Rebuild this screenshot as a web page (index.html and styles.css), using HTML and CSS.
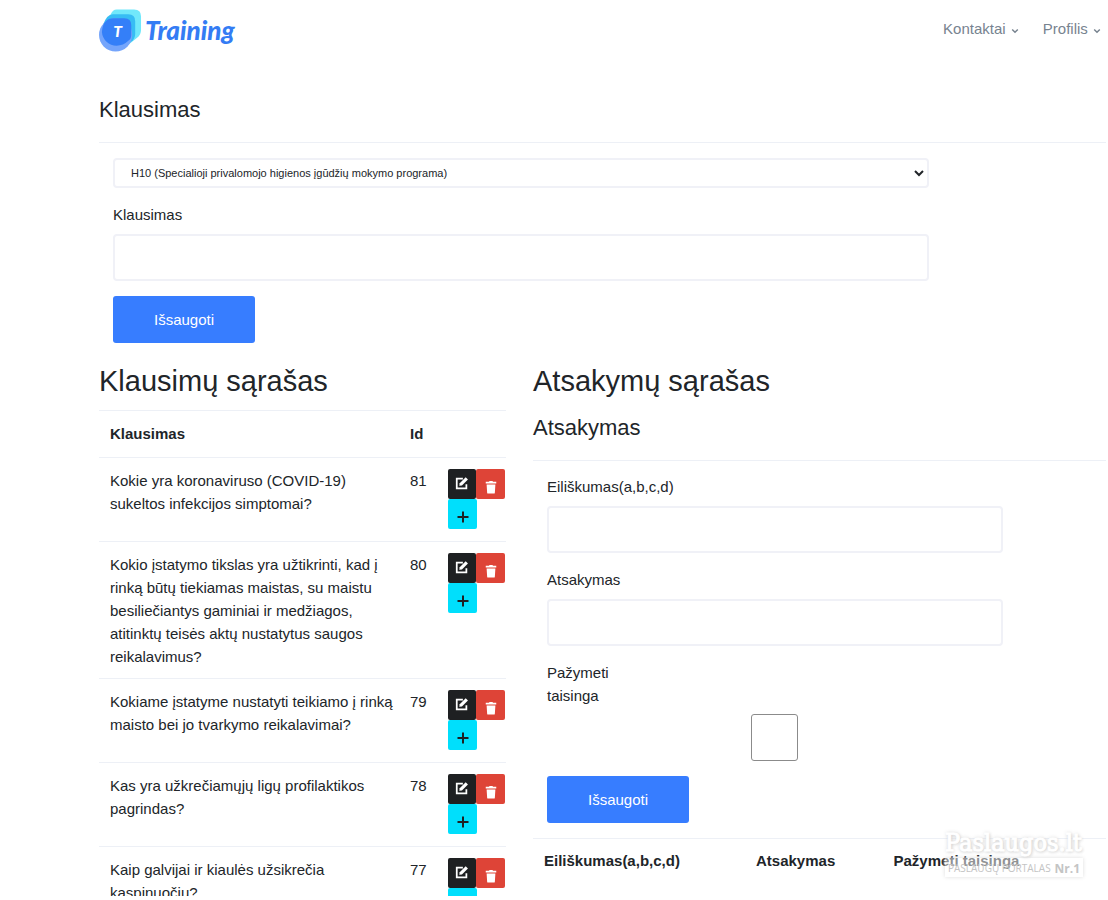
FILE: index.html
```html
<!DOCTYPE html>
<html lang="lt">
<head>
  <meta charset="UTF-8" />
  <meta name="viewport" content="width=device-width, initial-scale=1" />
  <title>Training</title>
  <link rel="stylesheet" href="styles.css">
</head>
<body>
  <svg class="sprite" aria-hidden="true">
    <symbol id="edit" viewBox="0 0 16 16">
      <path d="M9 3H2v11h11V9.500" fill="none" stroke="currentColor" stroke-width="2" />
      <path d="M4.800 11.200l.6-3L12.200 1.400l2.600 2.600-6.900 6.800z" fill="currentColor" />
    </symbol>
    <symbol id="trash" viewBox="0 0 14 16">
      <path d="M1 2h3.500l1-1h3l1 1H13v2H1zM2 5h10l-.6 9.500a1 1 0 0 1-1 1H3.600a1 1 0 0 1-1-1z" fill="currentColor" />
    </symbol>
    <symbol id="plus" viewBox="0 0 12 12">
      <path d="M6 .5v11M.5 6h11" fill="none" stroke="currentColor" stroke-width="2" />
    </symbol>
    <symbol id="chevron" viewBox="0 0 8 6">
      <path d="M1.200 1.500L4 4.200l2.800-2.700" fill="none" stroke="currentColor" stroke-width="1.500" />
    </symbol>
  </svg>

  <div class="page">
    <header class="header">
      <a class="brand" href="#">
        <svg class="brand-logo" viewBox="0 0 44 44" aria-hidden="true">
          <path d="M18 1h18q7 0 7 7v14q0 5-4 8l-9 7L8 16l4-10q2-5 6-5z" fill="#71e8fb" />
          <path d="M14 6h16q7 0 7 7v13q0 5-4 8l-7 5L4 17q4-11 10-11z" fill="#37bdf4" />
          <circle cx="17" cy="27" r="17" fill="#75a5fb" />
          <path d="M15 10h11q7 0 7 7v10q0 4-3 6-5 5-12 5A15 15 0 0 1 3 24Q4 10 15 10z" fill="#347ff8" />
          <text x="19" y="29" class="logo-letter">T</text>
        </svg>
        <span>Training</span>
      </a>
      <nav class="nav">
        <a href="#">Kontaktai <svg class="chevron"><use href="#chevron" /></svg></a>
        <a href="#">Profilis <svg class="chevron"><use href="#chevron" /></svg></a>
      </nav>
    </header>

    <main>
      <h4 class="title">Klausimas</h4>
      <form class="form question-form">
        <select class="select" aria-label="Programa">
          <option>H10 (Specialioji privalomojo higienos įgūdžių mokymo programa)</option>
        </select>
        <label for="question">Klausimas</label>
        <input class="input" type="text" id="question">
        <button class="save" type="button">Išsaugoti</button>
      </form>

      <div class="columns">
        <section>
          <h2>Klausimų sąrašas</h2>
          <table class="questions">
            <thead>
              <tr><th>Klausimas</th><th class="col-id">Id</th><th class="col-actions"></th></tr>
            </thead>
            <tbody>
              <tr>
                <td>Kokie yra koronaviruso (COVID-19) sukeltos infekcijos simptomai?</td>
                <td>81</td>
                <td><div class="actions">
                  <button class="edit" aria-label="Redaguoti"><svg><use href="#edit" /></svg></button>
                  <button class="delete" aria-label="Trinti"><svg><use href="#trash" /></svg></button>
                  <button class="add" aria-label="Pridėti"><svg><use href="#plus" /></svg></button>
                </div></td>
              </tr>
              <tr>
                <td>Kokio įstatymo tikslas yra užtikrinti, kad į rinką būtų tiekiamas maistas, su maistu besiliečiantys gaminiai ir medžiagos, atitinktų teisės aktų nustatytus saugos reikalavimus?</td>
                <td>80</td>
                <td><div class="actions">
                  <button class="edit" aria-label="Redaguoti"><svg><use href="#edit" /></svg></button>
                  <button class="delete" aria-label="Trinti"><svg><use href="#trash" /></svg></button>
                  <button class="add" aria-label="Pridėti"><svg><use href="#plus" /></svg></button>
                </div></td>
              </tr>
              <tr>
                <td>Kokiame įstatyme nustatyti teikiamo į rinką maisto bei jo tvarkymo reikalavimai?</td>
                <td>79</td>
                <td><div class="actions">
                  <button class="edit" aria-label="Redaguoti"><svg><use href="#edit" /></svg></button>
                  <button class="delete" aria-label="Trinti"><svg><use href="#trash" /></svg></button>
                  <button class="add" aria-label="Pridėti"><svg><use href="#plus" /></svg></button>
                </div></td>
              </tr>
              <tr>
                <td>Kas yra užkrečiamųjų ligų profilaktikos pagrindas?</td>
                <td>78</td>
                <td><div class="actions">
                  <button class="edit" aria-label="Redaguoti"><svg><use href="#edit" /></svg></button>
                  <button class="delete" aria-label="Trinti"><svg><use href="#trash" /></svg></button>
                  <button class="add" aria-label="Pridėti"><svg><use href="#plus" /></svg></button>
                </div></td>
              </tr>
              <tr>
                <td>Kaip galvijai ir kiaulės užsikrečia kaspinuočiu?</td>
                <td>77</td>
                <td><div class="actions">
                  <button class="edit" aria-label="Redaguoti"><svg><use href="#edit" /></svg></button>
                  <button class="delete" aria-label="Trinti"><svg><use href="#trash" /></svg></button>
                  <button class="add" aria-label="Pridėti"><svg><use href="#plus" /></svg></button>
                </div></td>
              </tr>
            </tbody>
          </table>
        </section>

        <section>
          <h2>Atsakymų sąrašas</h2>
          <h4 class="title">Atsakymas</h4>
          <form class="form answer-form">
            <label for="order">Eiliškumas(a,b,c,d)</label>
            <input class="input" type="text" id="order">
            <label for="answer">Atsakymas</label>
            <input class="input" type="text" id="answer">
            <label class="check-label" for="correct">Pažymeti taisinga</label>
            <input class="check" type="checkbox" id="correct">
            <button class="save" type="button">Išsaugoti</button>
          </form>
          <table class="answers">
            <thead>
              <tr><th>Eiliškumas(a,b,c,d)</th><th>Atsakymas</th><th>Pažymeti taisinga</th></tr>
            </thead>
          </table>
        </section>
      </div>
    </main>
  </div>

  <div class="watermark">
    <div class="watermark-name">Paslaugos.lt</div>
    <div class="watermark-bar"><span>PASLAUGŲ PORTALAS</span><b>Nr.1</b></div>
  </div>
</body>
</html>
```

FILE: styles.css
```css
* {
  box-sizing: border-box;
}
body {
  margin: 0;
  font-family: "Liberation Sans", Arial, sans-serif;
  font-size: 15px;
  line-height: 23px;
  color: #212529;
  background: #fff;
}
.sprite {
  display: none;
}
.page {
  height: calc(100vh - 4px);
  overflow: hidden;
  padding: 0 2px 0 99px;
}

/* header */
.header {
  display: flex;
  justify-content: space-between;
  align-items: center;
  height: 60px;
}
.brand {
  display: flex;
  align-items: center;
  gap: 3px;
  color: #347cf4;
  font-family: Lato, sans-serif;
  font-size: 26px;
  font-weight: 900;
  font-style: italic;
  text-decoration: none;
}
.brand-logo {
  width: 43px;
  height: 44px;
}
.logo-letter {
  fill: #fff;
  font-size: 16px;
  text-anchor: middle;
}
.nav {
  display: flex;
  gap: 24px;
  padding: 0 5px 4px 0;
}
.nav a {
  color: #77838f;
  text-decoration: none;
}
.chevron {
  width: 8px;
  height: 6px;
  margin-left: 1px;
}

/* headings */
h2,
h4 {
  margin: 0;
  font-weight: normal;
}
h2 {
  font-size: 29px;
  line-height: 36px;
}
.title {
  font-size: 22px;
  line-height: 28px;
  padding-bottom: 18px;
  border-bottom: 1px solid #edf0f6;
}
main > .title {
  padding-top: 36px;
}

/* forms */
.form {
  display: flex;
  flex-direction: column;
  align-items: flex-start;
}
.form label {
  margin-bottom: 8px;
}
.question-form {
  width: 83%;
  padding: 15px 6px 20px 14px;
}
.answer-form {
  width: 82%;
  padding: 14px 0 15px 14px;
}
.select,
.input {
  width: 100%;
  border: 2px solid #f0f1f7;
  border-radius: 4px;
  background: #fff;
  color: #212529;
}
.select {
  height: 30px;
  margin-bottom: 15px;
  padding: 0 0 0 12px;
  font-family: inherit;
  font-size: 11px;
}
.input {
  height: 47px;
  margin-bottom: 15px;
  padding: 0 14px;
  font-family: inherit;
  font-size: 15px;
}
.save {
  width: 142px;
  height: 47px;
  border: none;
  border-radius: 3px;
  background: #377dff;
  color: #fff;
  font-family: inherit;
  font-size: 15px;
  cursor: pointer;
}
.form .check-label {
  width: 70px;
  margin-bottom: 7px;
}
.check {
  appearance: none;
  align-self: center;
  width: 47px;
  height: 47px;
  margin: 0 0 15px;
  border: 1px solid #8b8b8b;
  border-radius: 3px;
  background: #fff;
}
.check:checked {
  background: #377dff;
}

/* lists */
.columns {
  display: grid;
  grid-template-columns: 407fr 573fr;
  gap: 27px;
}
.columns .title {
  padding-top: 15px;
}
table {
  width: 100%;
  border-collapse: separate;
  border-spacing: 0;
}
th,
td {
  padding: 11px 4px 10px 11px;
  border-top: 1px solid #edf0f6;
  text-align: left;
  vertical-align: top;
}
.questions {
  table-layout: fixed;
  margin-top: 11px;
}
.questions th {
  padding-bottom: 12px;
}
.questions td:last-child {
  padding-right: 0;
}
.col-id {
  width: 38px;
}
.col-actions {
  width: 69px;
}
.actions {
  display: flex;
  flex-wrap: wrap;
  width: 57px;
  padding-bottom: 2px;
}
.actions button {
  display: flex;
  align-items: center;
  justify-content: center;
  width: 29px;
  height: 30px;
  padding: 0;
  border: none;
  border-radius: 2px;
  cursor: pointer;
}
.actions .edit {
  width: 28px;
  padding-bottom: 2px;
  background: #1e2022;
  color: #fff;
}
.actions .delete {
  padding-top: 6px;
  background: #de4437;
  color: #fff;
}
.actions .add {
  padding-top: 6px;
  background: #00dffc;
  color: #1e2022;
}
.actions svg {
  width: 14px;
  height: 14px;
}
.actions .add svg {
  width: 12px;
  height: 12px;
}
.answers th {
  padding-top: 10px;
}
.answers th:first-child {
  width: 37%;
}
.answers th:nth-child(2) {
  width: 24%;
}

/* watermark over the page */
.watermark {
  position: absolute;
  right: 25px;
  bottom: 23px;
  width: 138px;
  color: #fff;
}
.watermark-name {
  font-family: "DejaVu Serif Condensed", "DejaVu Serif", serif;
  font-size: 25px;
  line-height: 30px;
  -webkit-text-stroke: 1px #fff;
  text-shadow: 0 0 4px #ccc, 1px 1px 3px #ccc;
}
.watermark-bar {
  display: flex;
  justify-content: space-between;
  height: 19px;
  background: rgba(255, 255, 255, 0.5);
  box-shadow: 0 0 4px #ddd;
  color: #c4c4c4;
  font-family: "Open Sans", sans-serif;
  font-size: 10px;
  line-height: 21px;
  white-space: nowrap;
}
.watermark-bar span {
  padding-left: 3px;
}
.watermark-bar b {
  padding: 0 3px;
  background: #fff;
  font-size: 12px;
}
```
